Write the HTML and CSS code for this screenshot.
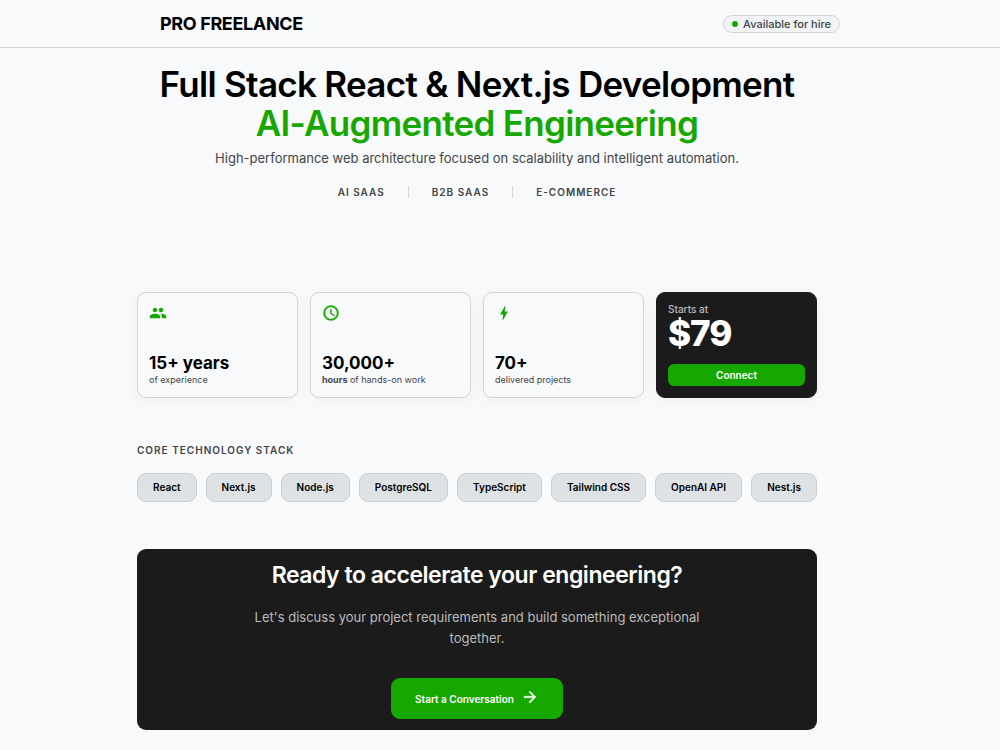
FILE: index.html
```html
<!DOCTYPE html>
<html lang="en">
  <head>
    <meta charset="utf-8" />
    <title>Pro Freelance</title>
    <meta name="viewport" content="width=device-width, initial-scale=1" />
    <link rel="stylesheet" href="styles.css">
  </head>

  <body>
    <header class="header">
      <div class="header-inner">
        <div class="logo">PRO FREELANCE</div>
        <div class="status"><span class="dot"></span>Available for hire</div>
      </div>
    </header>

    <main class="main">
      <section class="hero">
        <h1>
          Full Stack React &amp; Next.js Development <br />
          <span class="accent">AI-Augmented Engineering</span>
        </h1>
        <p class="subtitle">High-performance web architecture focused on scalability and intelligent automation.</p>
        <ul class="tags">
          <li>AI SAAS</li>
          <li>B2B SAAS</li>
          <li>E-COMMERCE</li>
        </ul>
      </section>

      <section class="cards">
        <div class="card">
          <svg class="icon" viewBox="0 0 24 24"><path d="M16 11c1.66 0 2.99-1.34 2.99-3S17.66 5 16 5s-3 1.34-3 3 1.34 3 3 3zm-8 0c1.66 0 2.99-1.34 2.99-3S9.66 5 8 5 5 6.34 5 8s1.34 3 3 3zm0 2c-2.33 0-7 1.17-7 3.5V19h14v-2.500c0-2.330-4.670-3.500-7-3.500zm8 0c-.29 0-.62.02-.97.05 1.160.84 1.970 1.970 1.970 3.450V19h6v-2.500c0-2.330-4.670-3.500-7-3.500z"/></svg>
          <div>
            <div class="number">15+ years</div>
            <div class="label">of experience</div>
          </div>
        </div>
        <div class="card">
          <svg class="icon icon-clock" viewBox="0 0 24 24"><path d="M11.990 2C6.470 2 2 6.480 2 12s4.470 10 9.990 10C17.520 22 22 17.520 22 12S17.520 2 11.990 2zM12 20c-4.420 0-8-3.580-8-8s3.580-8 8-8 8 3.580 8 8-3.580 8-8 8zm.5-13H11v6l5.250 3.150.75-1.230-4.500-2.670z"/></svg>
          <div>
            <div class="number">30,000+</div>
            <div class="label"><b>hours</b> of hands-on work</div>
          </div>
        </div>
        <div class="card">
          <svg class="icon" viewBox="0 0 24 24"><path d="M11 21h-1l1-7H7.500c-.88 0-.33-.75-.31-.78C8.480 10.940 10.420 7.540 13.010 3h1l-1 7h3.510c.4 0 .62.190.4.660C12.970 17.550 11 21 11 21z"/></svg>
          <div>
            <div class="number">70+</div>
            <div class="label">delivered projects</div>
          </div>
        </div>
        <div class="card card-dark">
          <div>
            <div class="starts">Starts at</div>
            <div class="price">$79</div>
          </div>
          <button class="connect">Connect</button>
        </div>
      </section>

      <section class="stack">
        <h2>CORE TECHNOLOGY STACK</h2>
        <ul class="pills">
          <li>React</li>
          <li>Next.js</li>
          <li>Node.js</li>
          <li>PostgreSQL</li>
          <li>TypeScript</li>
          <li>Tailwind CSS</li>
          <li>OpenAI API</li>
          <li>Nest.js</li>
        </ul>
      </section>

      <section class="cta">
        <h2>Ready to accelerate your engineering?</h2>
        <p>Let's discuss your project requirements and build something exceptional together.</p>
        <button class="start">
          Start a Conversation
          <svg class="arrow" viewBox="0 0 24 24"><path d="M12 4l-1.410 1.410L16.170 11H4v2h12.170l-5.580 5.590L12 20l8-8z"/></svg>
        </button>
      </section>
    </main>
  </body>
</html>
```

FILE: styles.css
```css
* {
  box-sizing: border-box;
}

body {
  margin: 0;
  background: #f8f9fb;
  color: #000;
  font-family: Inter, "Liberation Sans", sans-serif;
}

h1,
h2,
p,
ul {
  margin: 0;
  padding: 0;
}

ul {
  list-style: none;
}

button {
  border: none;
  background: #16a800;
  color: #fff;
  font-family: inherit;
  font-weight: 600;
  cursor: pointer;
}

.header {
  border-bottom: 1px solid #d2d4d6;
}

.header-inner {
  display: flex;
  justify-content: space-between;
  align-items: center;
  max-width: 680px;
  height: 47px;
  margin: 0 auto;
}

.logo {
  font-size: 18px;
  font-weight: 700;
  letter-spacing: -0.02em;
}

.status {
  display: flex;
  align-items: center;
  gap: 5px;
  padding: 0 8px;
  border: 1px solid #d2d4d6;
  border-radius: 9px;
  background: #f2f3f4;
  color: #414548;
  font-size: 11px;
  font-weight: 500;
  line-height: 16px;
}

.dot {
  width: 6px;
  height: 6px;
  border-radius: 50%;
  background: #16a800;
}

.main {
  max-width: 726px;
  margin: 0 auto;
  padding: 17px 46px 20px 0;
}

.hero {
  text-align: center;
}

h1 {
  font-size: 35px;
  font-weight: 600;
  line-height: 39px;
  letter-spacing: -0.02em;
}

.accent {
  color: #16a800;
}

.subtitle {
  margin-top: 5px;
  color: #414548;
  font-size: 13px;
  line-height: 21px;
}

.tags {
  display: flex;
  justify-content: center;
  margin-top: 17px;
  color: #414548;
  font-size: 10px;
  font-weight: 600;
  line-height: 12px;
  letter-spacing: 1px;
}

.tags li {
  padding: 0 23px;
}

.tags li + li {
  border-left: 1px solid #d2d4d6;
}

.cards {
  display: grid;
  grid-template-columns: repeat(4, 1fr);
  gap: 12px;
  margin-top: 94px;
}

.card {
  display: flex;
  flex-direction: column;
  justify-content: space-between;
  min-height: 106px;
  padding: 11px;
  border: 1px solid #d2d4d6;
  border-radius: 9px;
  box-shadow: 0 3px 14px rgba(0, 0, 0, 0.04);
}

.card-dark {
  padding: 10px 11px 11px;
  border-color: #1b1b1b;
  background: #1b1b1b;
  color: #fff;
}

.icon {
  width: 18px;
  height: 18px;
  fill: #16a800;
}

.icon-clock {
  stroke: #16a800;
  stroke-width: 0.5;
}

.number {
  font-size: 17px;
  font-weight: 700;
  line-height: 22px;
}

.label {
  color: #414548;
  font-size: 9px;
  line-height: 12px;
}

.starts {
  color: #bcbcbc;
  font-size: 10px;
  font-weight: 500;
  line-height: 12px;
}

.price {
  font-size: 35px;
  font-weight: 800;
  line-height: 36px;
  letter-spacing: -0.03em;
}

.connect {
  width: 100%;
  height: 22px;
  border-radius: 6px;
  font-size: 10px;
}

.stack {
  margin-top: 45px;
}

.stack h2 {
  color: #414548;
  font-size: 10px;
  font-weight: 600;
  line-height: 14px;
  letter-spacing: 1px;
}

.pills {
  display: flex;
  flex-wrap: wrap;
  gap: 9px;
  margin-top: 16px;
}

.pills li {
  flex: 1 0 auto;
  padding: 0 12px;
  border: 1px solid #cbcdcf;
  border-radius: 9px;
  background: #dfe2e4;
  font-size: 10px;
  font-weight: 600;
  line-height: 27px;
  text-align: center;
}

.cta {
  margin-top: 47px;
  padding: 11px;
  border-radius: 9px;
  background: #1b1b1b;
  color: #fff;
  text-align: center;
}

.cta h2 {
  font-size: 23px;
  font-weight: 600;
  line-height: 30px;
  letter-spacing: -0.02em;
}

.cta p {
  max-width: 460px;
  margin: 17px auto 29px;
  color: #bcbcbc;
  font-size: 13px;
  line-height: 21px;
}

.start {
  display: inline-flex;
  align-items: center;
  gap: 7px;
  height: 41px;
  padding: 0 24px;
  border-radius: 9px;
  font-size: 10px;
}

.arrow {
  width: 18px;
  height: 18px;
  margin-bottom: 3px;
  fill: #fff;
  stroke: #fff;
  stroke-width: 0.5;
}
```
